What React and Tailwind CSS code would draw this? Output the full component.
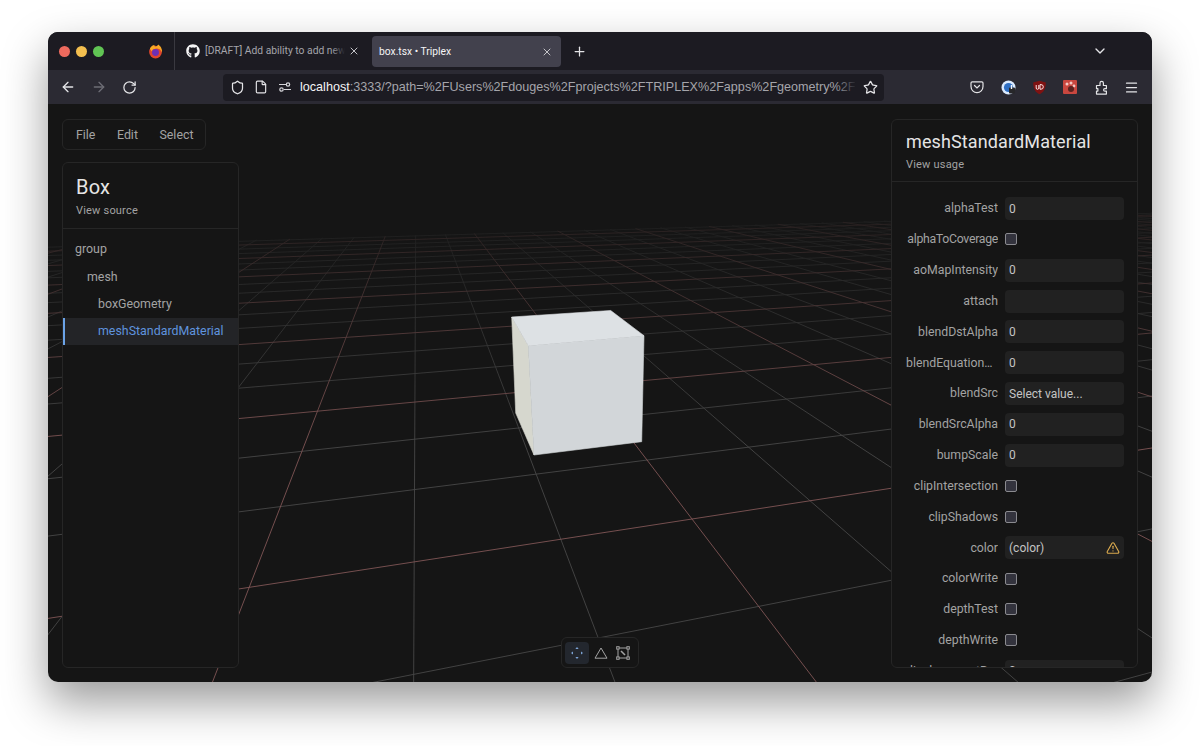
import React from 'react'
import { ArrowLeft, ArrowRight, RotateCw, Shield, File, Star, Menu, ChevronDown, X, Plus, TriangleAlert } from 'lucide-react'
import { FaGithub } from 'react-icons/fa'

// floor grid: homography fitted to the screenshot, page px minus viewport origin (48,104)
const O = [692 - 48, 519 - 104]
const VU = [3050 - 48, 155 - 104]
const VV = [416 - 48, 157 - 104]
const A = 0.0527
const B = 0.1945
const project = (u, v) => {
  const d = 1 + u * A + v * B
  return [(O[0] + u * A * VU[0] + v * B * VV[0]) / d, (O[1] + u * A * VU[1] + v * B * VV[1]) / d]
}
const MIN_D = 0.04
const VMAX = 19.2
const gridLines = []
for (let u = -18; u <= 60; u++) {
  const from = Math.max(-5, (MIN_D - 1 - u * A) / B)
  gridLines.push({ a: project(u, from), b: project(u, VMAX), major: u % 3 === 0 })
}
for (let v = -4; v <= 19; v++) {
  const from = (MIN_D - 1 - v * B) / A
  gridLines.push({ a: project(from, v), b: project(60, v), major: v % 3 === 0 })
}

const treeItems = [
  { name: 'group', cls: 'pl-[10px]' },
  { name: 'mesh', cls: 'pl-[22px]' },
  { name: 'boxGeometry', cls: 'pl-[33px]' },
  { name: 'meshStandardMaterial', cls: 'pl-[33px]', selected: true },
]

const props = [
  { name: 'alphaTest', value: '0' },
  { name: 'alphaToCoverage', check: true, tight: true },
  { name: 'aoMapIntensity', value: '0' },
  { name: 'attach', value: '' },
  { name: 'blendDstAlpha', value: '0' },
  { name: 'blendEquationAlpha', value: '0' },
  { name: 'blendSrc', value: 'Select value...' },
  { name: 'blendSrcAlpha', value: '0' },
  { name: 'bumpScale', value: '0' },
  { name: 'clipIntersection', check: true },
  { name: 'clipShadows', check: true },
  { name: 'color', value: '(color)', warn: true },
  { name: 'colorWrite', check: true },
  { name: 'depthTest', check: true },
  { name: 'depthWrite', check: true },
  { name: 'displacementBias', value: '0' },
]

const FloorGrid = () => (
  <svg className="absolute inset-0" width="1104" height="578" viewBox="0 0 1104 578">
    <defs>
      <linearGradient id="fade" gradientUnits="userSpaceOnUse" x1="0" y1="122" x2="0" y2="340">
        <stop offset="0" stopColor="#fff" stopOpacity="0.2" />
        <stop offset="1" stopColor="#fff" stopOpacity="1" />
      </linearGradient>
      <mask id="floorMask" maskUnits="userSpaceOnUse" x="0" y="0" width="1104" height="578">
        <rect x="0" y="0" width="1104" height="578" fill="url(#fade)" />
      </mask>
    </defs>
    <g mask="url(#floorMask)" fill="none" strokeWidth="0.9">
      {gridLines.filter((l) => !l.major).map((l, i) => (
        <line key={i} x1={l.a[0]} y1={l.a[1]} x2={l.b[0]} y2={l.b[1]} stroke="#474747" />
      ))}
      {gridLines.filter((l) => l.major).map((l, i) => (
        <line key={i} x1={l.a[0]} y1={l.a[1]} x2={l.b[0]} y2={l.b[1]} stroke="#805656" />
      ))}
    </g>
    {/* the box */}
    <g transform="translate(-48 -104)" strokeWidth="0.6" strokeLinejoin="round">
      <polygon points="511.7,317 528.3,345.7 534,455 515.7,413" fill="#d6d7ce" stroke="#d6d7ce" />
      <polygon points="528.3,345.7 644,335.7 641.7,441.7 534,455" fill="#d2d6d9" stroke="#d2d6d9" />
      <polygon points="511.7,317 610.7,310.5 644,335.7 528.3,345.7" fill="#dde1e4" stroke="#dde1e4" />
    </g>
  </svg>
)

const FirefoxLogo = () => (
  <svg width="15" height="15" viewBox="0 0 16 16">
    <circle cx="8" cy="8.6" r="6.8" fill="#e0452c" />
    <path d="M2 5 C3 2.5 5 1.2 7 1 C6.6 2 7.2 2.6 8.4 2.8 C10 1.8 10.6 1 10.8 0.4 C13.6 2 15.4 5.4 14.8 9 C14 6.6 12.4 5.2 10.4 5 C8 4.6 5 5.4 4 8 C3.4 7 2.8 6 2 5 Z" fill="#f9a825" />
    <circle cx="8" cy="9" r="3.7" fill="#6d2fb5" />
  </svg>
)

const SlidersIcon = () => (
  <svg width="14" height="14" viewBox="0 0 14 14" fill="none" stroke="#d4d4d8" strokeWidth="1.2">
    <path d="M1 4.5h7" />
    <circle cx="10" cy="4.5" r="1.7" />
    <circle cx="3.5" cy="9.5" r="1.7" />
    <path d="M6 9.5h7" />
  </svg>
)

const PocketIcon = () => (
  <svg width="14" height="14" viewBox="0 0 14 14" fill="none" stroke="#e4e4e7" strokeWidth="1.2">
    <path d="M1 3a1.2 1.2 0 0 1 1.2-1.2h9.6A1.2 1.2 0 0 1 13 3v3.6a6 6 0 0 1-12 0Z" />
    <path d="M4.5 5.5 7 8l2.5-2.5" strokeLinecap="round" />
  </svg>
)

const PasswordIcon = () => (
  <svg width="15" height="15" viewBox="0 0 15 15">
    <circle cx="7.5" cy="7.5" r="7" fill="#dbeafe" />
    <circle cx="7.5" cy="7.5" r="4.6" fill="#2f6fc4" />
    <rect x="8" y="7.5" width="6" height="6" rx="1" fill="#27272a" />
    <rect x="9.8" y="5" width="1.4" height="4" fill="#f4f4f5" />
  </svg>
)

const UblockIcon = () => (
  <svg width="15" height="15" viewBox="0 0 15 15">
    <path d="M7.5 0.8 13.8 2.4C13.8 8.5 11.6 12.4 7.5 14.2 3.4 12.4 1.2 8.5 1.2 2.4Z" fill="#7f1212" />
    <path d="M4.2 5v3a1.3 1.3 0 0 0 2.6 0V5" fill="none" stroke="#fde2e2" strokeWidth="1" />
    <path d="M8 4.6h1a2 2 0 0 1 0 4.6H8Z" fill="none" stroke="#fde2e2" strokeWidth="1" />
  </svg>
)

const PawIcon = () => (
  <svg width="14" height="14" viewBox="0 0 14 14">
    <rect width="14" height="14" rx="1" fill="#c9473f" />
    <circle cx="4" cy="4" r="1.5" fill="#f3c9c4" />
    <circle cx="8" cy="3" r="1.5" fill="#f3c9c4" />
    <circle cx="11" cy="6" r="1.4" fill="#f3c9c4" />
    <circle cx="8" cy="9" r="3" fill="#5b2320" />
  </svg>
)

const ExtensionIcon = () => (
  <svg width="15" height="15" viewBox="0 0 15 15" fill="none" stroke="#e4e4e7" strokeWidth="1.2" strokeLinejoin="round">
    <path d="M2.5 5.5H6V3a1.7 1.7 0 0 1 3.4 0v2.5h3v3.2h-1.6a1.2 1.2 0 0 0 0 2.4h1.6v3H2.5v-3h1.4v-2.4H2.5Z" />
  </svg>
)

const MoveIcon = () => (
  <svg width="14" height="14" viewBox="0 0 14 14" fill="#7fa6d8">
    <path d="M7 1 8.6 3H5.4Z" />
    <path d="M7 13 8.6 11H5.4Z" />
    <path d="M1 7 3 5.4V8.6Z" />
    <path d="M13 7 11 5.4V8.6Z" />
  </svg>
)

const BoxSelectIcon = () => (
  <svg width="14" height="14" viewBox="0 0 14 14" fill="none" stroke="#a3a3a3" strokeWidth="1">
    <rect x="2" y="2" width="10" height="10" />
    <rect x="0.7" y="0.7" width="2.4" height="2.4" fill="#151515" />
    <rect x="10.9" y="0.7" width="2.4" height="2.4" fill="#151515" />
    <rect x="0.7" y="10.9" width="2.4" height="2.4" fill="#151515" />
    <rect x="10.9" y="10.9" width="2.4" height="2.4" fill="#151515" />
    <path d="M5 5l4 4" strokeWidth="1.6" />
  </svg>
)

const TriangleIcon = () => (
  <svg width="14" height="14" viewBox="0 0 14 14" fill="none" stroke="#a3a3a3" strokeWidth="1">
    <path d="M7 2 13 12.2H1Z" />
  </svg>
)

const PropRow = ({ item }) => (
  <div className="flex items-center gap-[7px] h-[23px] mb-[7.85px] shrink-0">
    <div className={`w-[92px] truncate text-right text-[12.3px] text-[#a3a3a3] ${item.tight ? 'tracking-[-0.3px]' : ''}`}>{item.name}</div>
    {item.check ? (
      <div className="w-[12px] h-[12px] rounded-[2px] border border-[#8a8a8f] bg-[#33333d]" />
    ) : (
      <div className="w-[119px] h-[23px] rounded-[4px] bg-[#212121] flex items-center justify-between px-[4px] text-[12px] text-[#c4c4c4]">
        <span>{item.value}</span>
        {item.warn && <TriangleAlert size={14} className="text-[#d9a94e]" />}
      </div>
    )}
  </div>
)

export default function App() {
  return (
    <div className="w-[1200px] h-[746px] bg-white pt-[32px] px-[48px] overflow-hidden">
      <div className="relative w-[1104px] h-[650px] rounded-[10px] overflow-hidden flex flex-col bg-[#151515] shadow-[0_20px_45px_rgba(0,0,0,0.4)]">
        {/* tab strip */}
        <div className="h-[38px] shrink-0 bg-[#1c1b22] flex items-center font-['Roboto',sans-serif] text-[11px]">
          <div className="flex items-center gap-[6px] w-[127px] pl-[11px] h-full border-r border-[#3a3940]">
            <span className="w-[11px] h-[11px] rounded-full bg-[#ed6a5e]" />
            <span className="w-[11px] h-[11px] rounded-full bg-[#f4bf4f]" />
            <span className="w-[11px] h-[11px] rounded-full bg-[#61c554]" />
            <span className="ml-[38px]"><FirefoxLogo /></span>
          </div>
          <div className="flex items-center w-[197px] pl-[11px] h-full text-[#a5a5ab]">
            <FaGithub size={14} className="text-[#f4f4f5] shrink-0" />
            <div className="relative ml-[5px] w-[140px] whitespace-nowrap overflow-hidden text-[10.3px]">
              [DRAFT] Add ability to add new tab
              <div className="absolute right-0 top-0 w-[14px] h-full bg-gradient-to-r from-transparent to-[#1c1b22]" />
            </div>
            <X size={12} className="ml-[3px] text-[#c4c4c8] shrink-0" />
          </div>
          <div className="flex items-center justify-between w-[189px] h-[31px] mt-[1px] rounded-[4px] bg-[#42414d] pl-[7px] pr-[8px] text-[#f4f4f5] text-[10.3px]">
            <span>box.tsx • Triplex</span>
            <X size={12} className="text-[#c4c4c8]" />
          </div>
          <Plus size={15} className="ml-[11px] text-[#e4e4e7]" />
          <ChevronDown size={16} className="ml-[505px] text-[#e4e4e7]" />
        </div>

        {/* nav bar */}
        <div className="h-[34px] shrink-0 bg-[#2b2a33] flex items-center">
          <ArrowLeft size={16} className="ml-[12px] text-[#e4e4e7]" />
          <ArrowRight size={16} className="ml-[15px] text-[#6d6d75]" />
          <RotateCw size={15} className="ml-[15px] text-[#e4e4e7]" />
          <div className="relative ml-[86px] w-[661px] h-[27px] rounded-[4px] bg-[#1c1b22] flex items-center">
            <Shield size={15} className="ml-[7px] text-[#e4e4e7] shrink-0" />
            <File size={14} className="ml-[9px] text-[#e4e4e7] shrink-0" />
            <span className="ml-[10px] shrink-0"><SlidersIcon /></span>
            <div className="ml-[8px] w-[555px] overflow-hidden whitespace-nowrap font-['Liberation_Sans',sans-serif] text-[12.6px] text-[#a5a5ab]">
              <span className="text-[#f4f4f5]">localhost</span>:3333/?path=%2FUsers%2Fdouges%2Fprojects%2FTRIPLEX%2Fapps%2Fgeometry%2Fsrc%2Fgeometry%2Fbox.tsx
            </div>
            <div className="absolute left-[612px] top-0 w-[22px] h-full bg-gradient-to-r from-transparent to-[#1c1b22]" />
            <Star size={15} className="absolute left-[640px] text-[#e4e4e7]" />
          </div>
          <span className="ml-[86px]"><PocketIcon /></span>
          <span className="ml-[17px]"><PasswordIcon /></span>
          <span className="ml-[16px]"><UblockIcon /></span>
          <span className="ml-[16px]"><PawIcon /></span>
          <span className="ml-[17px]"><ExtensionIcon /></span>
          <Menu size={15} className="ml-[15px] text-[#e4e4e7]" />
        </div>

        {/* scene */}
        <div className="relative flex-1 overflow-hidden font-['Roboto',sans-serif]">
          <FloorGrid />
          <div className="relative h-full flex justify-between pl-[14px] pr-[14px] pt-[15px] pb-[14px]">
            <div className="w-[177px] flex flex-col gap-[12px]">
              <div className="w-[144px] h-[31px] shrink-0 rounded-[6px] border border-[#262626] bg-[#151515] flex items-center pl-[13px] pt-[1px] gap-[21.5px] text-[12.4px] text-[#a3a3a3]">
                <span>File</span>
                <span>Edit</span>
                <span>Select</span>
              </div>
              <div className="flex-1 rounded-[6px] border border-[#262626] bg-[#151515]">
                <div className="h-[66px] px-[13px] pt-[11px] border-b border-[#262626]">
                  <div className="text-[20px] leading-[26px] tracking-[0.2px] text-[#e5e5e5]">Box</div>
                  <div className="mt-[4px] text-[11px] tracking-[0.2px] leading-[14px] text-[#a3a3a3]">View source</div>
                </div>
                <div className="pt-[7px]">
                  {treeItems.map((t) => (
                    <div
                      key={t.name}
                      className={`h-[27.3px] flex items-center text-[12.4px] border-l-2 ${t.cls} ${t.selected ? 'border-[#6ba3e8] bg-[#232427] text-[#5f93de]' : 'border-transparent text-[#a3a3a3]'}`}
                    >
                      {t.name}
                    </div>
                  ))}
                </div>
              </div>
            </div>

            <div className="w-[247px] rounded-[6px] border border-[#262626] bg-[#151515] flex flex-col overflow-hidden">
              <div className="h-[62px] shrink-0 px-[14px] pt-[10px] border-b border-[#262626]">
                <div className="text-[18px] leading-[24px] tracking-[0.12px] text-[#e5e5e5]">meshStandardMaterial</div>
                <div className="mt-[4px] text-[11px] tracking-[0.2px] leading-[14px] text-[#a3a3a3]">View usage</div>
              </div>
              <div className="flex-1 overflow-hidden pl-[14px] pt-[15px]">
                {props.map((p) => (
                  <PropRow key={p.name} item={p} />
                ))}
              </div>
            </div>
          </div>

          {/* transform controls */}
          <div className="absolute left-[513px] top-[533px] w-[78px] h-[31px] rounded-[6px] border border-[#262626] bg-[#151515] flex items-center pl-[3px]">
            <div className="w-[24px] h-[22px] rounded-[4px] bg-[#23272e] flex items-center justify-center"><MoveIcon /></div>
            <div className="w-[23px] flex justify-center"><TriangleIcon /></div>
            <div className="w-[22px] flex justify-center"><BoxSelectIcon /></div>
          </div>
        </div>
      </div>
    </div>
  )
}
